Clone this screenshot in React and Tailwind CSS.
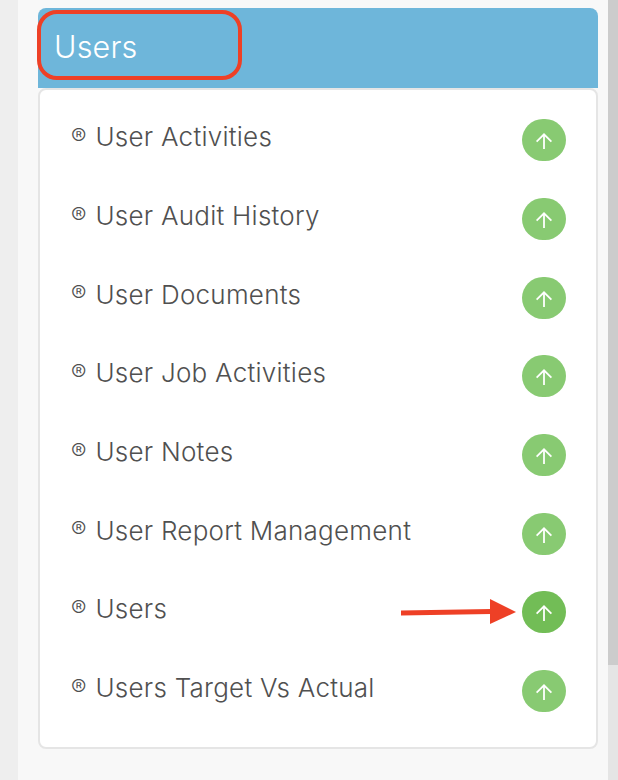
import React from "react";

const items = [
  "User Activities",
  "User Audit History",
  "User Documents",
  "User Job Activities",
  "User Notes",
  "User Report Management",
  "Users",
  "Users Target Vs Actual",
];

function UpIcon() {
  return (
    <svg className="mt-[2px]" width="16" height="16" viewBox="0 0 16 16" fill="none" stroke="#fff" strokeWidth="1.8">
      <path d="M8 16V1.5" />
      <path d="M0.6 8.6L8 1.3L15.4 8.6" />
    </svg>
  );
}

export default function App() {
  return (
    <div className="flex h-[780px] w-[618px] overflow-hidden bg-[#f8f8f8] font-['Inter',sans-serif]">
      <div className="w-[18px] shrink-0 bg-[#eeeeee]" />
      <main className="relative flex-1 pl-5 pr-[10px] pt-2">
        <header className="flex h-[80px] items-center rounded-t-lg bg-[#6eb6da] pb-[3px] pl-[16px] text-[30.5px] font-light tracking-[0.2px] text-white">
          Users
        </header>
        <div className="absolute left-[19px] top-[10px] h-[70px] w-[205px] rounded-[20px] border-4 border-[#ee4026]" />
        <div className="flex h-[661px] flex-col rounded-lg border-2 border-[#e5e5e5] bg-white pl-[31px] pr-[30px] pt-[10px]">
          {items.map((label, i) => (
            <div key={label} className="flex h-[78.7px] shrink-0 items-center justify-between">
              <span className="flex items-center pb-1 text-[26px] font-[350] leading-none tracking-[0.25px] text-[#505050]">
                <span className="mr-[9px] text-[23px] font-[350] leading-none tracking-normal">®</span>
                {label}
              </span>
              <span
                className={
                  "mt-[2px] flex h-[42px] w-[44px] items-center justify-center rounded-full " +
                  (i === 6 ? "bg-[#72bd56]" : "bg-[#88ca72]")
                }
              >
                <UpIcon />
              </span>
            </div>
          ))}
        </div>
        <svg className="absolute left-[383px] top-[598px]" width="122" height="28" viewBox="0 0 122 28">
          <path d="M0 15L90 13.5" stroke="#ee4026" strokeWidth="5" fill="none" />
          <path d="M89 1L115 14L89 26Z" fill="#ee4026" />
        </svg>
      </main>
      <div className="flex w-[10px] shrink-0 flex-col bg-[#e5e5e5]">
        <div className="h-[665px] bg-[#cccccc]" />
      </div>
    </div>
  );
}
